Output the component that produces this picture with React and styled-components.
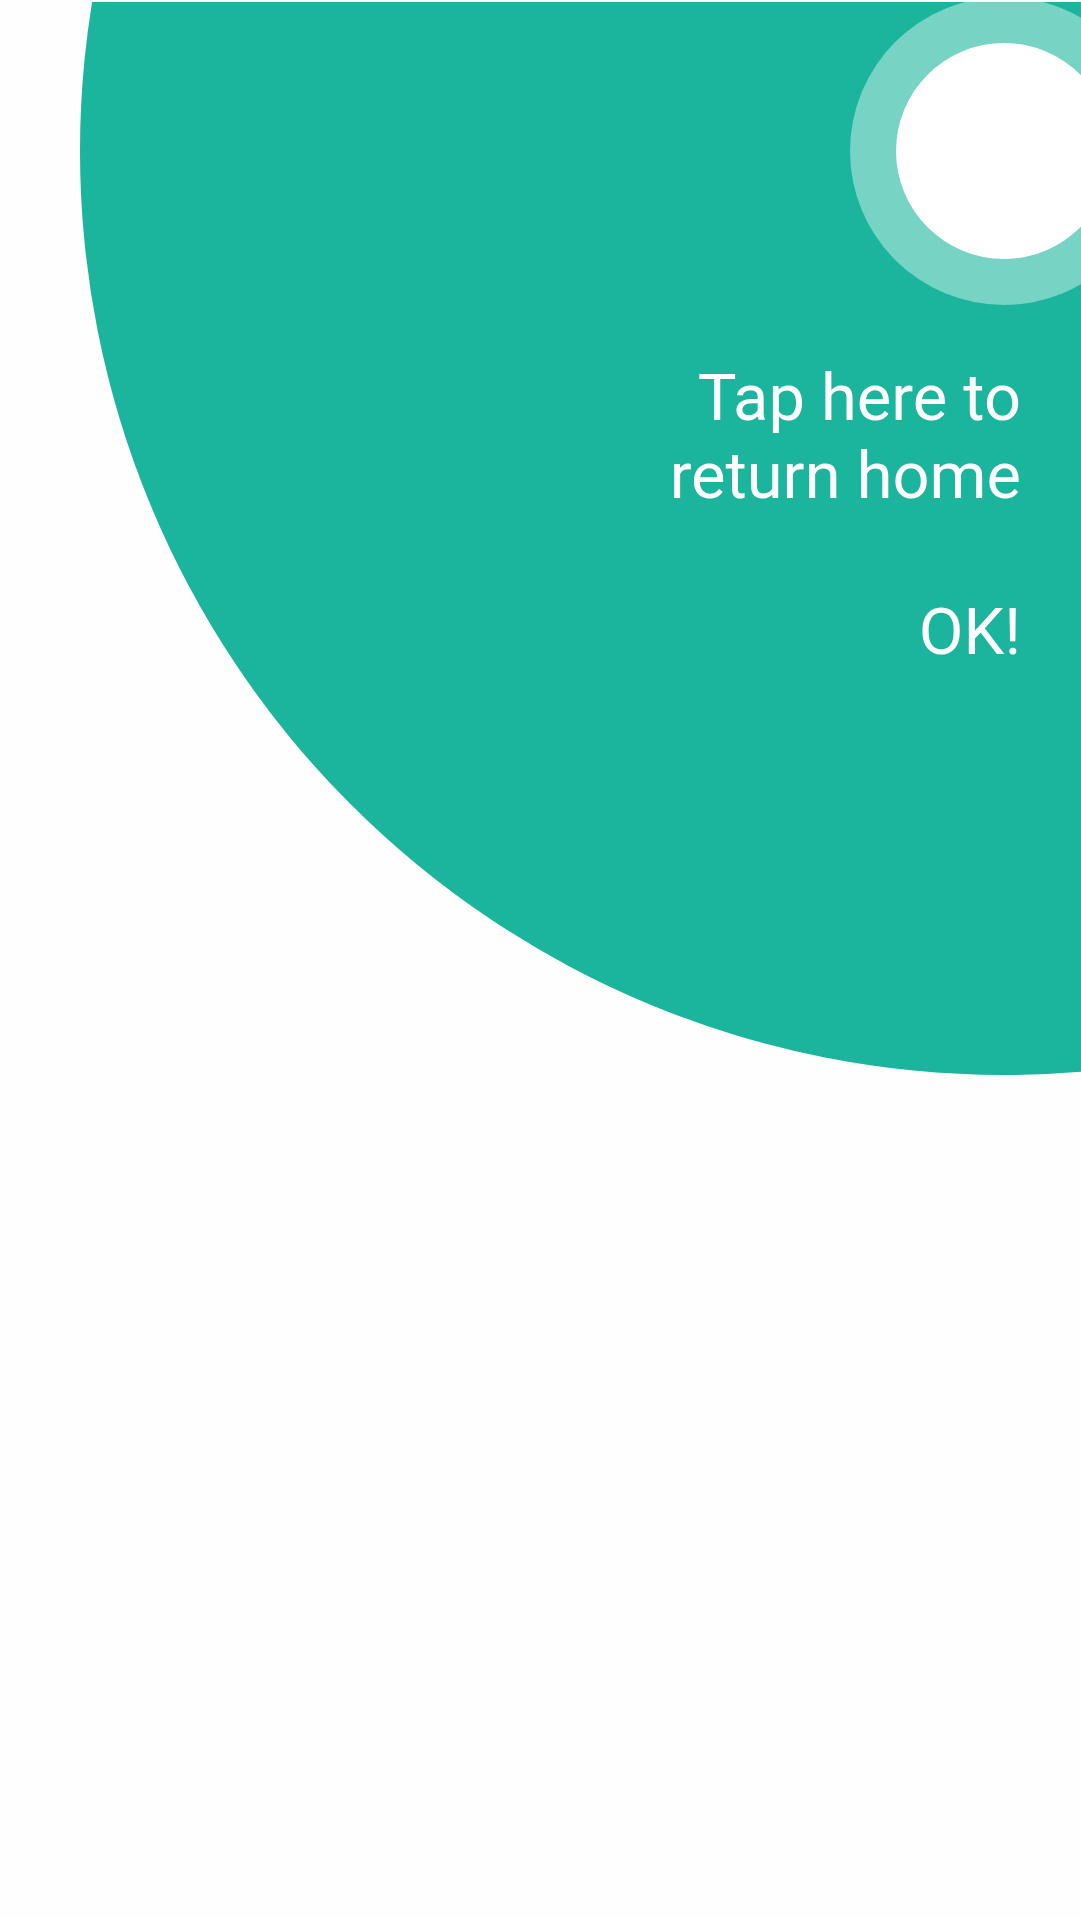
import React from "react";
import styled, { createGlobalStyle } from "styled-components";

const GlobalStyle = createGlobalStyle`
  * {
    box-sizing: border-box;
  }

  body {
    margin: 0;
    background: #fefefe;
    font-family: Roboto, "Liberation Sans", sans-serif;
  }
`;

const Page = styled.div`
  min-height: 100vh;
  padding-top: 2px;
`;

const Showcase = styled.main`
  display: flex;
  flex-direction: column;
  align-items: flex-end;
  min-height: 1080px;
  overflow: hidden;
  isolation: isolate;
`;

/* The highlighted corner button; the large coloured disc is centred behind it. */
const Target = styled.button`
  position: relative;
  flex: none;
  width: 308px;
  height: 308px;
  margin: -5px -77px 0 0;
  padding: 46px;
  border: 0;
  border-radius: 50%;
  background: #77d3c4;
  cursor: pointer;

  &::before {
    content: "";
    position: absolute;
    z-index: -1;
    inset: -770px;
    border-radius: 50%;
    background: #1bb49c;
  }
`;

const TargetCore = styled.span`
  display: block;
  height: 100%;
  border-radius: 50%;
  background: #ffffff;
`;

const Message = styled.section`
  display: flex;
  flex-direction: column;
  align-items: flex-end;
  gap: 78px;
  padding: 54px 60px 0 0;
  color: #ffffff;
  font-size: 65px;
  line-height: 78px;
  text-align: right;
`;

const Hint = styled.p`
  margin: 0;
`;

const Confirm = styled.button`
  padding: 0;
  border: 0;
  background: none;
  color: inherit;
  font: inherit;
  cursor: pointer;
`;

export default function App() {
  return (
    <Page>
      <GlobalStyle />
      <Showcase>
        <Target type="button" aria-labelledby="hint">
          <TargetCore />
        </Target>
        <Message>
          <Hint id="hint">
            Tap here to
            <br />
            return home
          </Hint>
          <Confirm type="button">OK!</Confirm>
        </Message>
      </Showcase>
    </Page>
  );
}
